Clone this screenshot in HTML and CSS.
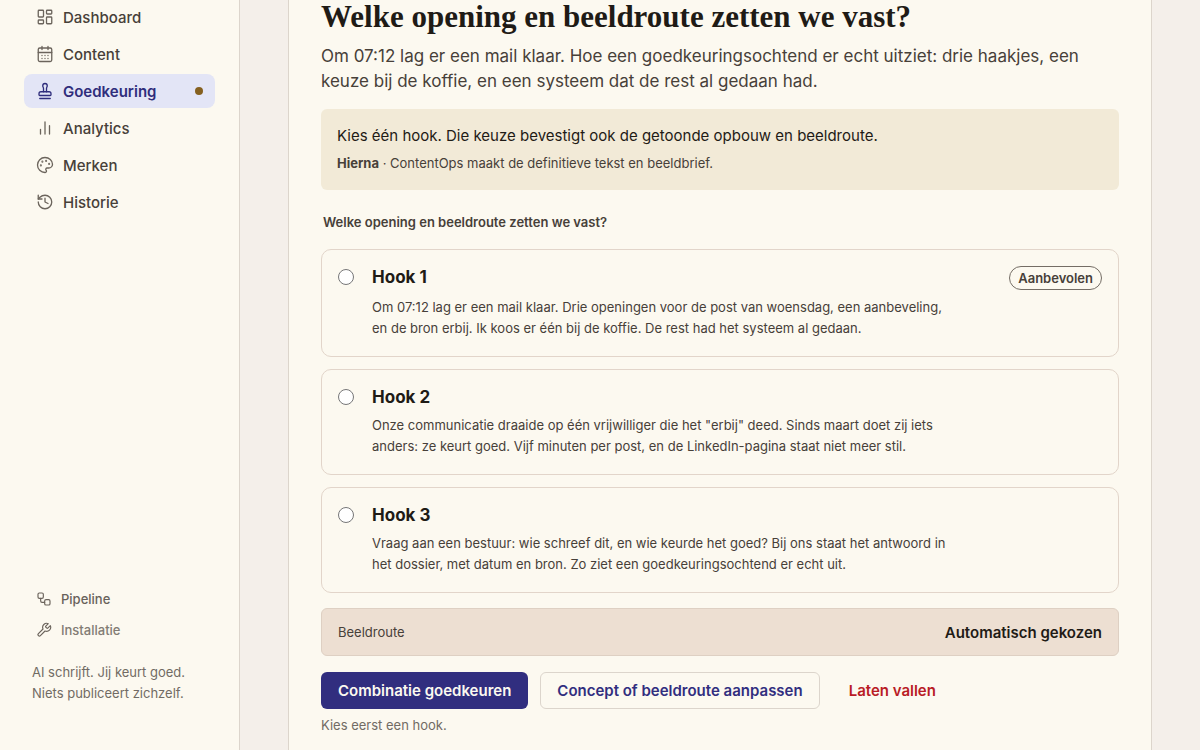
FILE: index.html
```html
<!DOCTYPE html>
<html lang="nl">
<head>
  <meta charset="UTF-8">
  <meta name="viewport" content="width=device-width, initial-scale=1">
  <title>Goedkeuring</title>
  <link rel="stylesheet" href="styles.css">
</head>
<body>
  <aside class="sidebar">
    <nav class="nav">
      <a href="#dashboard" class="nav-item">
        <svg class="icon" viewBox="0 0 24 24"><rect x="3" y="3" width="7" height="9" rx="1"/><rect x="14" y="3" width="7" height="5" rx="1"/><rect x="14" y="12" width="7" height="9" rx="1"/><rect x="3" y="16" width="7" height="5" rx="1"/></svg>
        Dashboard
      </a>
      <a href="#content" class="nav-item">
        <svg class="icon" viewBox="0 0 24 24"><path d="M8 2v4M16 2v4M3 10h18"/><rect x="3" y="4" width="18" height="18" rx="2"/><path d="M8 14h.01M12 14h.01M16 14h.01M8 18h.01M12 18h.01M16 18h.01"/></svg>
        Content
      </a>
      <a href="#goedkeuring" class="nav-item active" aria-current="page">
        <svg class="icon" viewBox="0 0 24 24"><path d="M14 13V8.500C14 7 15 7 15 5a3 3 0 0 0-6 0c0 2 1 2 1 3.500V13"/><path d="M20 15.500a2.500 2.500 0 0 0-2.500-2.500h-11A2.500 2.500 0 0 0 4 15.500V17a1 1 0 0 0 1 1h14a1 1 0 0 0 1-1z"/><path d="M5 22h14"/></svg>
        Goedkeuring
        <span class="dot"></span>
      </a>
      <a href="#analytics" class="nav-item">
        <svg class="icon" viewBox="0 0 24 24"><path d="M6 20v-6M12 20V4M18 20V9"/></svg>
        Analytics
      </a>
      <a href="#merken" class="nav-item">
        <svg class="icon" viewBox="0 0 24 24"><path d="M12 22a1 1 0 0 1 0-20 10 9 0 0 1 10 9 5 5 0 0 1-5 5h-2.250a1.750 1.750 0 0 0-1.400 2.800l.3.4a1.750 1.750 0 0 1-1.400 2.800z"/><g class="spots"><circle cx="13.500" cy="6.500" r=".5"/><circle cx="17.500" cy="10.500" r=".5"/><circle cx="6.500" cy="12.500" r=".5"/><circle cx="8.500" cy="7.500" r=".5"/></g></svg>
        Merken
      </a>
      <a href="#historie" class="nav-item">
        <svg class="icon" viewBox="0 0 24 24"><path d="M3 12a9 9 0 1 0 9-9 9.750 9.750 0 0 0-6.740 2.740L3 8"/><path d="M3 3v5h5M12 7v5l4 2"/></svg>
        Historie
      </a>
    </nav>

    <div class="sidebar-footer">
      <a href="#pipeline" class="sub-item">
        <svg class="icon small" viewBox="0 0 24 24"><rect x="3" y="3" width="8" height="8" rx="2"/><path d="M7 11v4a2 2 0 0 0 2 2h4"/><rect x="13" y="13" width="8" height="8" rx="2"/></svg>
        Pipeline
      </a>
      <a href="#installatie" class="sub-item muted">
        <svg class="icon small" viewBox="0 0 24 24"><path d="M14.700 6.300a1 1 0 0 0 0 1.400l1.600 1.600a1 1 0 0 0 1.400 0l3.770-3.770a6 6 0 0 1-7.940 7.940l-6.910 6.910a2.120 2.120 0 0 1-3-3l6.910-6.910a6 6 0 0 1 7.940-7.940l-3.760 3.760z"/></svg>
        Installatie
      </a>
      <p class="tagline">AI schrijft. Jij keurt goed.<br>Niets publiceert zichzelf.</p>
    </div>
  </aside>

  <main class="main">
    <form class="panel">
      <h1>Welke opening en beeldroute zetten we vast?</h1>
      <p class="intro">Om 07:12 lag er een mail klaar. Hoe een goedkeuringsochtend er echt uitziet: drie haakjes, een keuze bij de koffie, en een systeem dat de rest al gedaan had.</p>

      <div class="notice">
        <p class="notice-title">Kies één hook. Die keuze bevestigt ook de getoonde opbouw en beeldroute.</p>
        <p class="notice-next"><strong>Hierna</strong> · ContentOps maakt de definitieve tekst en beeldbrief.</p>
      </div>

      <fieldset class="hooks">
        <legend>Welke opening en beeldroute zetten we vast?</legend>
        <label class="hook" for="hook-1">
          <input type="radio" name="hook" id="hook-1">
          <span class="hook-body">
            <span class="hook-head">
              <span class="hook-title">Hook 1</span>
              <span class="badge">Aanbevolen</span>
            </span>
            <span class="hook-text">Om 07:12 lag er een mail klaar. Drie openingen voor de post van woensdag, een aanbeveling, en de bron erbij. Ik koos er één bij de koffie. De rest had het systeem al gedaan.</span>
          </span>
        </label>
        <label class="hook" for="hook-2">
          <input type="radio" name="hook" id="hook-2">
          <span class="hook-body">
            <span class="hook-head">
              <span class="hook-title">Hook 2</span>
            </span>
            <span class="hook-text">Onze communicatie draaide op één vrijwilliger die het "erbij" deed. Sinds maart doet zij iets anders: ze keurt goed. Vijf minuten per post, en de LinkedIn-pagina staat niet meer stil.</span>
          </span>
        </label>
        <label class="hook" for="hook-3">
          <input type="radio" name="hook" id="hook-3">
          <span class="hook-body">
            <span class="hook-head">
              <span class="hook-title">Hook 3</span>
            </span>
            <span class="hook-text">Vraag aan een bestuur: wie schreef dit, en wie keurde het goed? Bij ons staat het antwoord in het dossier, met datum en bron. Zo ziet een goedkeuringsochtend er echt uit.</span>
          </span>
        </label>
      </fieldset>

      <div class="route">
        <span>Beeldroute</span>
        <strong>Automatisch gekozen</strong>
      </div>

      <div class="actions">
        <button type="submit" class="btn primary">Combinatie goedkeuren</button>
        <button type="button" class="btn secondary">Concept of beeldroute aanpassen</button>
        <button type="button" class="btn danger">Laten vallen</button>
      </div>
      <p class="hint">Kies eerst een hook.</p>
    </form>
  </main>
</body>
</html>
```
FILE: styles.css
```css
* {
  box-sizing: border-box;
}

body {
  margin: 0;
  display: flex;
  min-height: 100vh;
  background: #f4efea;
  color: #1f1b16;
  font-family: Inter, "Liberation Sans", sans-serif;
  font-size: 15px;
}

h1,
p {
  margin: 0;
}

.sidebar {
  flex: 0 0 240px;
  display: flex;
  flex-direction: column;
  justify-content: space-between;
  padding: 0 24px 46px;
  background: #fcf9f0;
  border-right: 1px solid #dcd5cc;
}

.nav {
  display: flex;
  flex-direction: column;
  gap: 3px;
}

.nav-item {
  display: flex;
  align-items: center;
  gap: 9px;
  height: 34px;
  padding: 0 12px;
  border-radius: 8px;
  color: #474039;
  font-weight: 500;
  text-decoration: none;
}

.nav-item.active {
  background: #e3e5f6;
  color: #2f2d7c;
  font-weight: 600;
}

.icon {
  width: 18px;
  height: 18px;
  flex: none;
  fill: none;
  stroke: #6b645c;
  stroke-width: 1.75;
  stroke-linecap: round;
  stroke-linejoin: round;
}

.nav-item.active .icon {
  stroke: #2f2d7c;
}

.icon.small {
  width: 16px;
  height: 16px;
}

.spots {
  fill: #6b645c;
}

.dot {
  width: 8px;
  height: 8px;
  margin-left: auto;
  border-radius: 50%;
  background: #85601f;
}

.sub-item {
  display: flex;
  align-items: center;
  gap: 9px;
  height: 31px;
  padding: 0 12px;
  color: #68625b;
  font-size: 13px;
  font-weight: 500;
  text-decoration: none;
}

.sub-item.muted {
  color: #827c74;
}

.tagline {
  padding: 17px 8px 0;
  color: #716b64;
  font-size: 13px;
  line-height: 21px;
}

.main {
  flex: 1;
  min-width: 0;
  display: flex;
  padding: 0 48px;
}

.panel {
  flex: 1;
  min-width: 0;
  padding: 0 32px;
  background: #fcf9f0;
  border: solid #dcd5cc;
  border-width: 0 1px;
}

h1 {
  font-family: "Liberation Serif", serif;
  font-size: 31px;
  font-weight: 700;
  line-height: 34px;
}

.intro {
  margin-top: 10px;
  color: #474039;
  font-size: 17px;
  line-height: 25px;
}

.notice {
  margin-top: 15px;
  padding: 14px 16px 17px;
  border-radius: 6px;
  background: #f2ead7;
}

.notice-title {
  line-height: 26px;
}

.notice-next {
  margin-top: 4px;
  color: #474039;
  font-size: 13px;
  line-height: 20px;
}

.hooks {
  display: flex;
  flex-direction: column;
  gap: 12px;
  min-width: 0;
  margin: 0;
  padding: 0;
  border: 0;
}

legend {
  padding: 22px 2px 17px;
  color: #474039;
  font-size: 13px;
  font-weight: 600;
  line-height: 20px;
}

.hook {
  display: flex;
  align-items: flex-start;
  gap: 18px;
  padding: 16px 16px 17px;
  border: 1px solid #e2d5ca;
  border-radius: 10px;
  cursor: pointer;
}

.hook input {
  flex: none;
  width: 16px;
  height: 16px;
  margin: 3px 0 0;
}

.hook-body {
  flex: 1;
}

.hook-head {
  display: flex;
  align-items: flex-start;
  justify-content: space-between;
}

.hook-title {
  font-size: 17px;
  font-weight: 700;
  line-height: 22px;
}

.badge {
  padding: 0 8px;
  border: 1px solid #746d65;
  border-radius: 12px;
  color: #474039;
  font-size: 13px;
  font-weight: 600;
  line-height: 22px;
}

.hook-text {
  display: block;
  max-width: 580px;
  margin-top: 7px;
  color: #474039;
  font-size: 13px;
  line-height: 21px;
}

.route {
  display: flex;
  align-items: center;
  justify-content: space-between;
  height: 48px;
  margin-top: 15px;
  padding: 0 16px;
  border: 1px solid #ded0c3;
  border-radius: 6px;
  background: #eddfd2;
  color: #474039;
  font-size: 13px;
}

.route strong {
  color: #1f1b16;
  font-size: 15px;
  font-weight: 600;
}

.actions {
  display: flex;
  gap: 12px;
  margin-top: 16px;
}

.btn {
  height: 37px;
  padding: 0 16px;
  border: 1px solid transparent;
  border-radius: 6px;
  background: none;
  font-family: inherit;
  font-size: 15px;
  font-weight: 600;
  cursor: pointer;
}

.btn.primary {
  background: #312e7f;
  color: #fcf9f0;
}

.btn.secondary {
  border-color: #dcd5cc;
  color: #312e7f;
}

.btn.danger {
  color: #b91c26;
}

.hint {
  padding: 6px 0 14px;
  color: #716b64;
  font-size: 13px;
  line-height: 20px;
}
```
